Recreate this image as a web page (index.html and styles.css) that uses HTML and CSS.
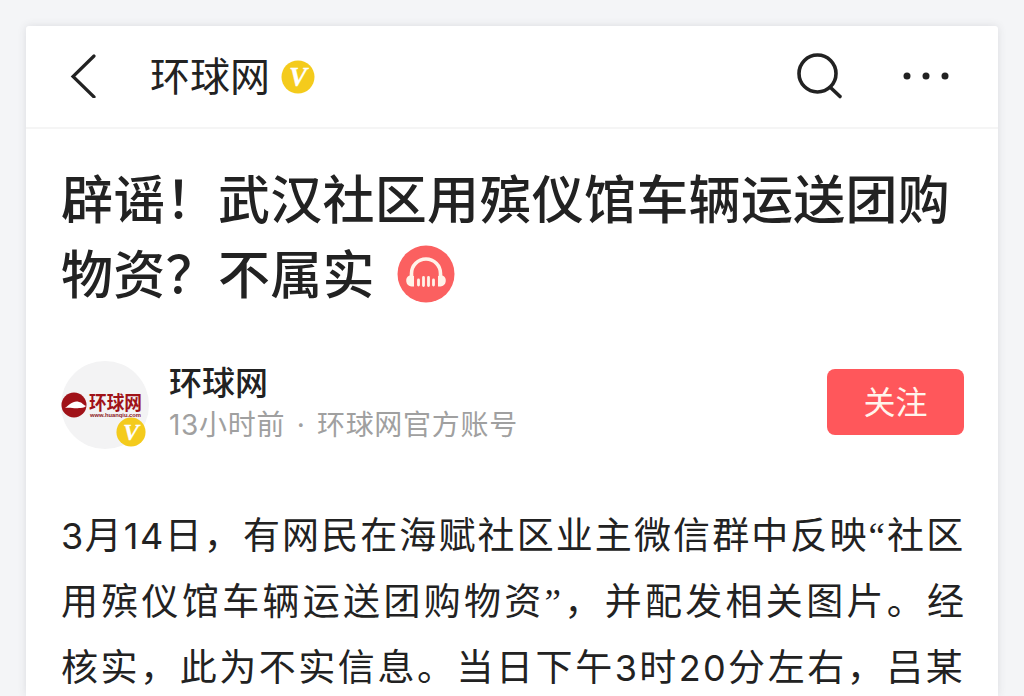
FILE: index.html
```html
<!DOCTYPE html>
<html lang="zh-CN">
<head>
<meta charset="utf-8">
<title>环球网</title>
<link rel="stylesheet" href="styles.css">
</head>
<body>
<main class="card">
  <header class="topbar">
    <svg class="back" viewBox="0 0 26 44"><path d="M24 2 3 22.500 24 43"/></svg>
    <span class="topbar-name">环球网</span>
    <svg class="badge badge-top" viewBox="0 0 34 34"><circle cx="17" cy="17" r="16.500"/><text x="17" y="26" text-anchor="middle">V</text></svg>
    <svg class="search" viewBox="0 0 48 48"><circle cx="21.500" cy="21.500" r="18.500"/><path d="M34.500 35.500 44 44.500"/></svg>
    <svg class="more" viewBox="0 0 46 8"><circle cx="4" cy="4" r="3.500"/><circle cx="23" cy="4" r="3.500"/><circle cx="42" cy="4" r="3.500"/></svg>
  </header>
  <article class="article">
    <h1 class="title">
      <span class="title-line">辟谣！武汉社区用殡仪馆车辆运送团购</span>
      <span class="title-line">物资？不属实<svg class="listen" viewBox="0 0 58 58"><circle class="listen-bg" cx="29" cy="29" r="28.500"/><path class="listen-band" d="M14.500 33V28.500a14.500 14.500 0 0 1 29 0V33"/><path class="listen-cup" d="M17 31v10.500h-2.500a5.800 5.800 0 0 1-2-11zM41 31v10.500h2.500a5.800 5.800 0 0 0 2-11z"/><path class="listen-bars" d="M21.500 35v5M26.500 32.500v8M31.500 32.500v8M36.500 35v5"/></svg></span>
    </h1>
    <section class="author">
      <div class="avatar">
        <svg class="logo" viewBox="0 0 88 88">
          <circle class="logo-globe" cx="13" cy="44" r="12.500"/>
          <path class="logo-cloud" d="M4 47c2-1 3-3 5-4 3-2 6-3 9-2 3 0 4 3 7 4-2 2-5 2-7 2-4 1-9-1-14 0z"/>
          <text class="logo-name" x="28" y="48.500" textLength="53" lengthAdjust="spacingAndGlyphs">环球网</text>
          <text class="logo-url" x="29" y="55.500" textLength="51" lengthAdjust="spacingAndGlyphs">www.huanqiu.com</text>
        </svg>
        <svg class="badge badge-avatar" viewBox="0 0 34 34"><circle cx="17" cy="17" r="16.500"/><text x="17" y="26" text-anchor="middle">V</text></svg>
      </div>
      <div class="author-info">
        <div class="author-name">环球网</div>
        <div class="author-meta"><span>13小时前</span><span>·</span><span>环球网官方账号</span></div>
      </div>
      <button class="follow">关注</button>
    </section>
    <p class="body">
      <span class="line line-1"><span class="num">3</span>月<span class="num">14</span>日，有网民在海赋社区业主微信群中反映<span class="quote">“</span>社区</span>
      <span class="line line-2">用殡仪馆车辆运送团购物资<span class="quote">”</span>，并配发相关图片。经</span>
      <span class="line line-3">核实，此为不实信息。当日下午<span class="num">3</span>时<span class="num">20</span>分左右，吕某</span>
    </p>
  </article>
</main>
</body>
</html>
```
FILE: styles.css
```css
* { box-sizing: border-box; }
html { overflow: hidden; }
body {
  margin: 0;
  height: 696px;
  overflow: hidden;
  padding: 26px 26px 0 26px;
  background: #f4f5f7;
  color: #222;
  font-family: Inter, "Noto Sans CJK SC", sans-serif;
}
.card {
  height: 670px;
  background: #fff;
  border-radius: 3px 3px 0 0;
  box-shadow: 0 0 9px rgba(60, 65, 75, .13);
}
.topbar {
  display: flex;
  align-items: center;
  height: 103px;
  padding: 0 49px 2px 44px;
  border-bottom: 2px solid #f5f5f5;
}
svg { display: block; flex: none; }
.back { width: 26px; height: 44px; fill: none; stroke: #222; stroke-width: 3.2; stroke-linecap: round; }
.topbar-name { margin-left: 54px; font-size: 40px; line-height: 60px; padding-top: 2px; }
.badge circle { fill: #f4cb1c; }
.badge text { fill: #fff; stroke: #fff; stroke-width: .3; font: italic bold 27px "Liberation Serif", serif; }
.badge-top { width: 34px; height: 34px; margin-left: 11px; margin-top: 2px; }
.search { width: 48px; height: 48px; margin-left: auto; fill: none; stroke: #222; stroke-width: 3.6; stroke-linecap: round; }
.more { width: 46px; height: 8px; margin-left: 59px; fill: #222; }
.article { padding: 34px 34px 0 35px; }
.title { margin: 0; font-size: 52px; font-weight: 500; letter-spacing: .3px; }
.title-line { display: flex; align-items: center; height: 75px; line-height: 75px; white-space: nowrap; }
.listen { width: 58px; height: 58px; margin: -3px 0 0 22px; }
.listen-bg { fill: #fb6060; }
.listen-band { fill: none; stroke: #fff3e9; stroke-width: 3.6; }
.listen-cup { fill: #fff3e9; }
.listen-bars { fill: none; stroke: #fff3e9; stroke-width: 2.8; stroke-linecap: round; }
.author { display: flex; align-items: center; height: 88px; margin-top: 48px; }
.avatar { position: relative; width: 88px; height: 88px; border-radius: 50%; background: #f3f3f4; }
.logo { width: 88px; height: 88px; }
.logo-globe { fill: #a01218; }
.logo-cloud { fill: #fff; }
.logo-name { fill: #a01218; font: bold 19px "Noto Sans CJK SC", sans-serif; }
.logo-url { fill: #8d2025; font: bold 6px "Liberation Sans", sans-serif; }
.badge-avatar { position: absolute; left: 55px; top: 56px; width: 30px; height: 30px; }
.author-info { margin-left: 20px; }
.author-name { font-size: 33px; line-height: 42px; font-weight: 500; margin-top: -2px; }
.author-meta { display: flex; gap: 11.5px; font-size: 28px; line-height: 42px; color: #a0a0a0; font-weight: 400; letter-spacing: .7px; white-space: nowrap; }
.follow {
  width: 137px;
  height: 66px;
  margin: -7px 0 0 auto;
  padding: 0 0 3px;
  border: 0;
  border-radius: 8px;
  background: #ff575b;
  color: #fff4ec;
  font: 400 32px "Noto Sans CJK SC", sans-serif;
}
.body { margin: 54px 0 0; font-size: 37px; }
.line { display: block; height: 66px; line-height: 66px; white-space: nowrap; }
.line-1 { letter-spacing: 2.1px; }
.line-2 { letter-spacing: 3.3px; }
.line-3 { letter-spacing: 2.55px; }
.num { letter-spacing: 1.5px; font-size: 36px; }
.line-3 .num { letter-spacing: 2.3px; }
.quote { font-family: "Liberation Serif", serif; font-size: 37px; line-height: 1; }
```
